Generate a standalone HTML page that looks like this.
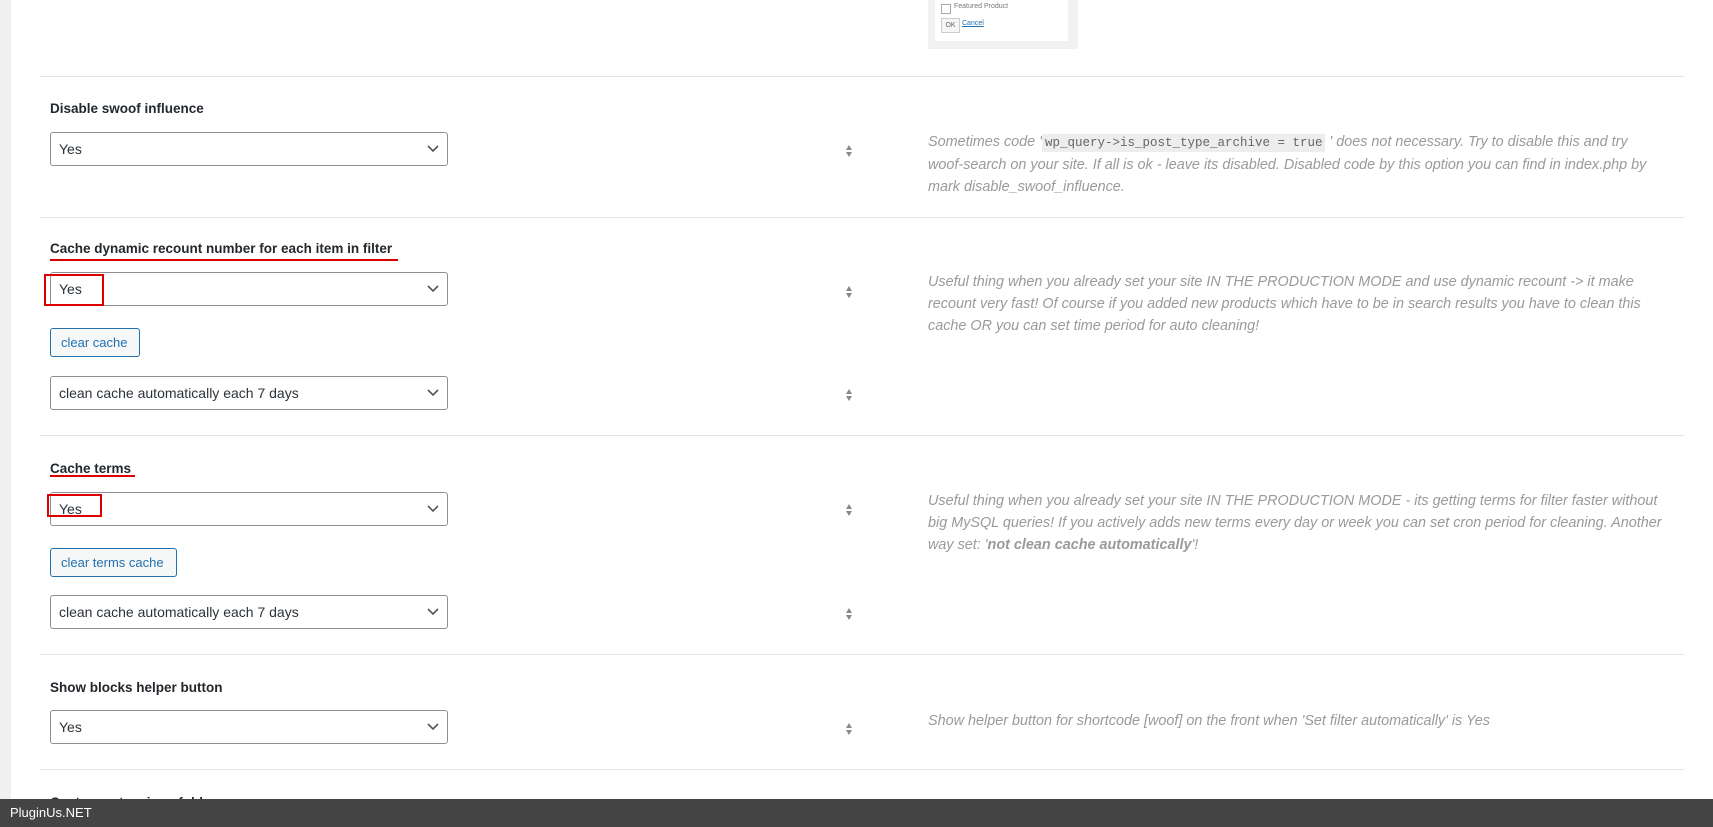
<!DOCTYPE html>
<html><head><meta charset="utf-8"><style>
body{margin:0;width:1713px;height:827px;overflow:hidden;background:#fff;font-family:"Liberation Sans",sans-serif;position:relative}
.a{position:absolute}
.strip{left:0;top:0;width:11px;height:827px;background:#f0f0f0}
.hr{left:40px;width:1644px;height:1px;background:#e2e6ea}
.lbl{left:50px;font-size:13.5px;font-weight:bold;color:#23282d;line-height:20px}
.sel{left:50px;width:398px;border:1px solid #8c8f94;border-radius:3px;box-sizing:border-box;height:34px;font-size:14px;color:#2c3338;line-height:32px;padding-left:8px}
.sel svg{position:absolute;right:8px;top:12px}
.spin{left:845px;width:8px;height:14px}
.desc{left:928px;white-space:nowrap;font-size:14.4px;font-style:italic;color:#9a9a9a;line-height:22px}
.btn{left:50px;height:29px;border:1px solid #2271b1;border-radius:3px;background:#f6f7f7;color:#2271b1;font-size:13px;line-height:27px;padding:0 10px;box-sizing:border-box}
.red{border:2px solid #d00;box-sizing:border-box}
.ul{height:2px;background:#d00}
code{font-family:"Liberation Mono",monospace;font-style:normal;background:#ededed;font-size:12.5px;padding:2px 3px;color:#666}
.foot{left:0;top:799px;width:1713px;height:28px;background:#444;color:#fff;font-size:13px;line-height:28px;padding-left:10px;box-sizing:border-box}
</style></head><body>
<div class="a strip"></div>
<div class="a" style="left:928px;top:0;width:150px;height:49px;background:#f1f1f1"></div>
<div class="a" style="left:935px;top:0;width:133px;height:41px;background:#fff"></div>
<div class="a" style="left:941px;top:4px;width:8px;height:8px;border:1px solid #aaa"></div>
<div class="a" style="left:954px;top:3px;font-size:7px;color:#777">Featured Product</div>
<div class="a" style="left:941px;top:18px;width:17px;height:13px;border:1px solid #ccc;background:#f6f6f6;font-size:7px;color:#666;text-align:center;line-height:13px">OK</div>
<div class="a" style="left:962px;top:20px;font-size:7px;color:#2271b1;text-decoration:underline">Cancel</div>

<div class="a hr" style="top:76px"></div>
<div class="a lbl" style="top:99px">Disable swoof influence</div>
<div class="a sel" style="top:132px">Yes<svg width="12" height="8"><path d="M1 1l5 5 5-5" stroke="#50575e" stroke-width="1.6" fill="none"/></svg></div>
<div class="a spin" style="top:144px"><svg width="8" height="14"><path d="M4 1l3 5H1z M4 13l3-5H1z" fill="#888"/></svg></div>
<div class="a desc" style="top:131px">Sometimes code '<code>wp_query-&gt;is_post_type_archive = true</code> ' does not necessary. Try to disable this and try<br>woof-search on your site. If all is ok - leave its disabled. Disabled code by this option you can find in index.php by<br>mark disable_swoof_influence.</div>
<div class="a hr" style="top:217px"></div>

<div class="a lbl" style="top:239px">Cache dynamic recount number for each item in filter</div>
<div class="a ul" style="left:50px;top:259px;width:348px"></div>
<div class="a sel" style="top:272px">Yes<svg width="12" height="8"><path d="M1 1l5 5 5-5" stroke="#50575e" stroke-width="1.6" fill="none"/></svg></div>
<div class="a red" style="left:44px;top:274px;width:60px;height:32px"></div>
<div class="a spin" style="top:285px"><svg width="8" height="14"><path d="M4 1l3 5H1z M4 13l3-5H1z" fill="#888"/></svg></div>
<div class="a desc" style="top:271px">Useful thing when you already set your site IN THE PRODUCTION MODE and use dynamic recount -&gt; it make<br>recount very fast! Of course if you added new products which have to be in search results you have to clean this<br>cache OR you can set time period for auto cleaning!</div>
<div class="a btn" style="top:328px;width:90px">clear cache</div>
<div class="a sel" style="top:376px">clean cache automatically each 7 days<svg width="12" height="8"><path d="M1 1l5 5 5-5" stroke="#50575e" stroke-width="1.6" fill="none"/></svg></div>
<div class="a spin" style="top:388px"><svg width="8" height="14"><path d="M4 1l3 5H1z M4 13l3-5H1z" fill="#888"/></svg></div>
<div class="a hr" style="top:435px"></div>

<div class="a lbl" style="top:459px">Cache terms</div>
<div class="a ul" style="left:50px;top:475px;width:85px"></div>
<div class="a sel" style="top:492px">Yes<svg width="12" height="8"><path d="M1 1l5 5 5-5" stroke="#50575e" stroke-width="1.6" fill="none"/></svg></div>
<div class="a red" style="left:47px;top:494px;width:55px;height:23px"></div>
<div class="a spin" style="top:503px"><svg width="8" height="14"><path d="M4 1l3 5H1z M4 13l3-5H1z" fill="#888"/></svg></div>
<div class="a desc" style="top:490px">Useful thing when you already set your site IN THE PRODUCTION MODE - its getting terms for filter faster without<br>big MySQL queries! If you actively adds new terms every day or week you can set cron period for cleaning. Another<br>way set: '<b>not clean cache automatically</b>'!</div>
<div class="a btn" style="top:548px;width:127px">clear terms cache</div>
<div class="a sel" style="top:595px">clean cache automatically each 7 days<svg width="12" height="8"><path d="M1 1l5 5 5-5" stroke="#50575e" stroke-width="1.6" fill="none"/></svg></div>
<div class="a spin" style="top:607px"><svg width="8" height="14"><path d="M4 1l3 5H1z M4 13l3-5H1z" fill="#888"/></svg></div>
<div class="a hr" style="top:654px"></div>

<div class="a lbl" style="top:678px">Show blocks helper button</div>
<div class="a sel" style="top:710px">Yes<svg width="12" height="8"><path d="M1 1l5 5 5-5" stroke="#50575e" stroke-width="1.6" fill="none"/></svg></div>
<div class="a spin" style="top:722px"><svg width="8" height="14"><path d="M4 1l3 5H1z M4 13l3-5H1z" fill="#888"/></svg></div>
<div class="a desc" style="top:710px">Show helper button for shortcode [woof] on the front when 'Set filter automatically' is Yes</div>
<div class="a hr" style="top:769px"></div>
<div class="a lbl" style="top:793px">Custom extensions folder</div>
<div class="a foot">PluginUs.NET</div>
</body></html>
